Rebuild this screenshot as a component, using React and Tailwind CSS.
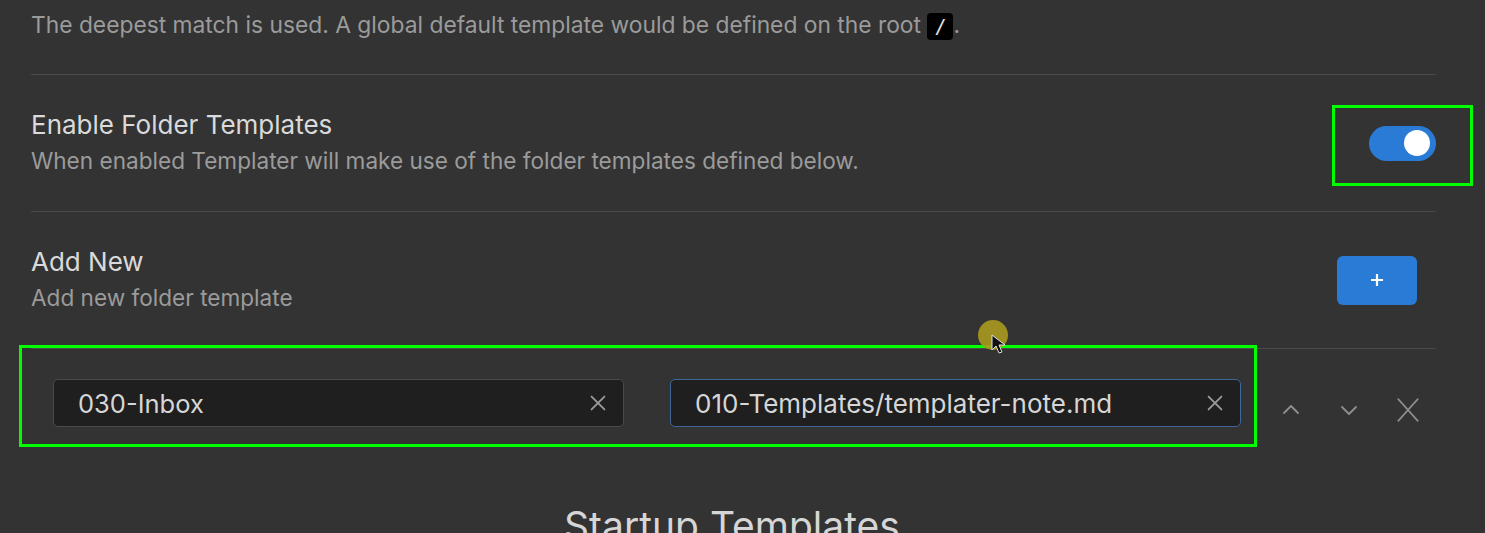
import React from 'react';

function XIcon({ className }) {
  return (
    <svg className={className} viewBox="0 0 24 24" fill="none" stroke="currentColor" strokeWidth={2} strokeLinecap="round">
      <path d="M5 5l14 14M19 5L5 19" />
    </svg>
  );
}

function SettingRow({ title, desc, children }) {
  return (
    <div className="flex items-center justify-between border-t border-[#4a4a4a] h-[137px]">
      <div className="flex flex-col gap-[6px]">
        <div className="text-[26px] leading-[30px] text-[#dadada]">{title}</div>
        <div className="text-[22.6px] leading-[30px] text-[#9b9b9b]">{desc}</div>
      </div>
      {children}
    </div>
  );
}

function PathInput({ value, focused }) {
  return (
    <div
      className={`flex items-center justify-between w-[571px] h-[48px] rounded-[5px] bg-[#1f1f1f] pl-[24px] pr-[14px] border ${
        focused ? 'border-[#3f6694]' : 'border-[#4a4a4a]'
      }`}
    >
      <span className={`${focused ? 'text-[26px]' : 'text-[25.5px]'} leading-[30px] pt-[2px] text-[#d6d6d6]`}>{value}</span>
      <XIcon className="w-[22px] h-[22px] text-[#9a9a9a]" />
    </div>
  );
}

export default function App() {
  return (
    <div className="relative w-[1485px] h-[533px] overflow-hidden bg-[#333333] font-['Inter',sans-serif]">
      <div className="ml-[31px] w-[1405px]">
        {/* intro text */}
        <div className="h-[74px] pt-[10px] text-[22.8px] leading-[30px] text-[#9b9b9b]">
          The deepest match is used. A global default template would be defined on the root{' '}
          <code className="inline-block bg-black text-[#e0e0e0] rounded-[4px] px-[7px] text-[20px] leading-[27px] font-['DejaVu_Sans_Mono',monospace]">/</code>.
        </div>

        <SettingRow title="Enable Folder Templates" desc="When enabled Templater will make use of the folder templates defined below.">
          <div className="w-[67px] h-[35px] rounded-full bg-[#2a7bd6] flex items-center justify-end pr-[6px]">
            <div className="w-[26px] h-[26px] rounded-full bg-white" />
          </div>
        </SettingRow>

        <SettingRow title="Add New" desc="Add new folder template">
          <button className="mr-[19px] w-[80px] h-[49px] rounded-[6px] bg-[#2a7bd6] flex items-center justify-center text-white">
            <svg className="w-[16px] h-[16px]" viewBox="0 0 16 16" stroke="currentColor" strokeWidth={2.2}>
              <path d="M8 2v12M2 8h12" />
            </svg>
          </button>
        </SettingRow>

        {/* folder template row */}
        <div className="border-t border-[#4a4a4a] flex items-center h-[124px] pb-[15px]">
          <div className="ml-[22px] flex items-center gap-[46px]">
            <PathInput value="030-Inbox" />
            <PathInput value="010-Templates/templater-note.md" focused />
          </div>
          <div className="ml-[38px] mt-[14px] flex items-center gap-[34px] text-[#8f8f8f]">
            <svg className="w-[24px] h-[24px]" viewBox="0 0 24 24" fill="none" stroke="currentColor" strokeWidth={1.8} strokeLinecap="round" strokeLinejoin="round">
              <path d="M5 15l7-7 7 7" />
            </svg>
            <svg className="w-[24px] h-[24px]" viewBox="0 0 24 24" fill="none" stroke="currentColor" strokeWidth={1.8} strokeLinecap="round" strokeLinejoin="round">
              <path d="M5 9l7 7 7-7" />
            </svg>
            <svg className="w-[26px] h-[26px]" viewBox="0 0 24 24" fill="none" stroke="currentColor" strokeWidth={1.5} strokeLinecap="round">
              <path d="M3 2l18 20M21 2L3 22" />
            </svg>
          </div>
        </div>

        <div className="pt-[30px] text-center text-[39px] leading-[48px] text-[#d6d6d6] pr-[3px]">Startup Templates</div>
      </div>

      {/* annotation boxes */}
      <div className="absolute left-[1332px] top-[105px] w-[141px] h-[81px] border-[3px] border-[#00ff00]" />
      <div className="absolute left-[19px] top-[345px] w-[1238px] h-[102px] border-[3px] border-[#00ff00]" />

      {/* cursor highlight */}
      <div className="absolute left-[978px] top-[320px] w-[30px] h-[30px] rounded-full bg-[#a89a1e]/90" />
      <svg className="absolute left-[991px] top-[334px] w-[16px] h-[22px]" viewBox="0 0 16 22">
        <path d="M1 1v15l4-4 3 7 3-1-3-7h6z" fill="#111" stroke="#ddd" strokeWidth={1} />
      </svg>
    </div>
  );
}
